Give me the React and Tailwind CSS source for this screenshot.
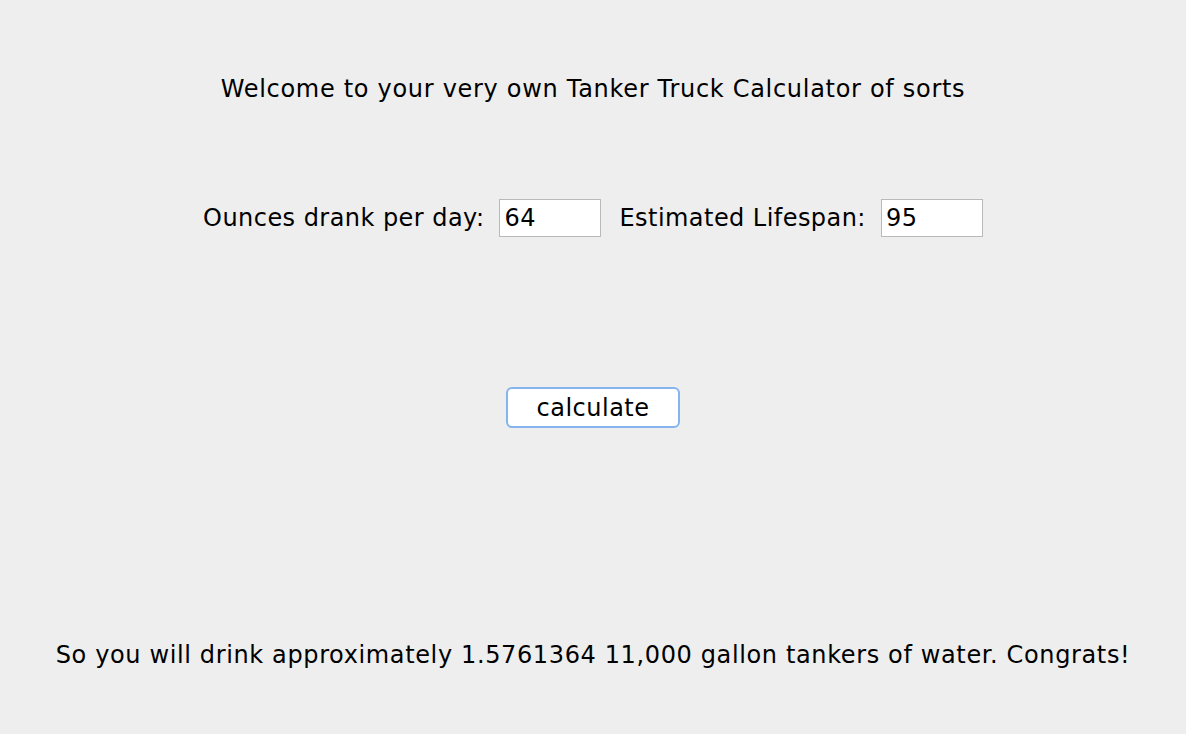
export default function App() {
  const font = { fontFamily: '"DejaVu Sans", "Liberation Sans", sans-serif' };
  return (
    <div className="w-[1186px] h-[734px] bg-[#eeeeee] text-black flex flex-col items-center" style={font}>
      <div className="mt-[74px] h-[30px] leading-[30px] text-[24px] tracking-[0.7px]">Welcome to your very own Tanker Truck Calculator of sorts</div>
      <div className="mt-[95px] flex items-center h-[38px] text-[24px] tracking-[0.45px]">
        <span>Ounces drank per day:</span>
        <div className="ml-[15px] w-[102px] h-[38px] bg-white border border-[#b9b9b9] flex items-center pl-[4px]">64</div>
        <span className="ml-[18px]">Estimated Lifespan:</span>
        <div className="ml-[15px] w-[102px] h-[38px] bg-white border border-[#b9b9b9] flex items-center pl-[4px]">95</div>
      </div>
      <button className="mt-[150px] w-[174px] h-[41px] bg-white border-2 border-[#85b4ee] rounded-[6px] text-[24px] tracking-[0.5px] flex items-center justify-center">calculate</button>
      <div className="mt-[212px] h-[30px] leading-[30px] text-[24px] tracking-[0.63px]">So you will drink approximately 1.5761364 11,000 gallon tankers of water. Congrats!</div>
    </div>
  );
}
